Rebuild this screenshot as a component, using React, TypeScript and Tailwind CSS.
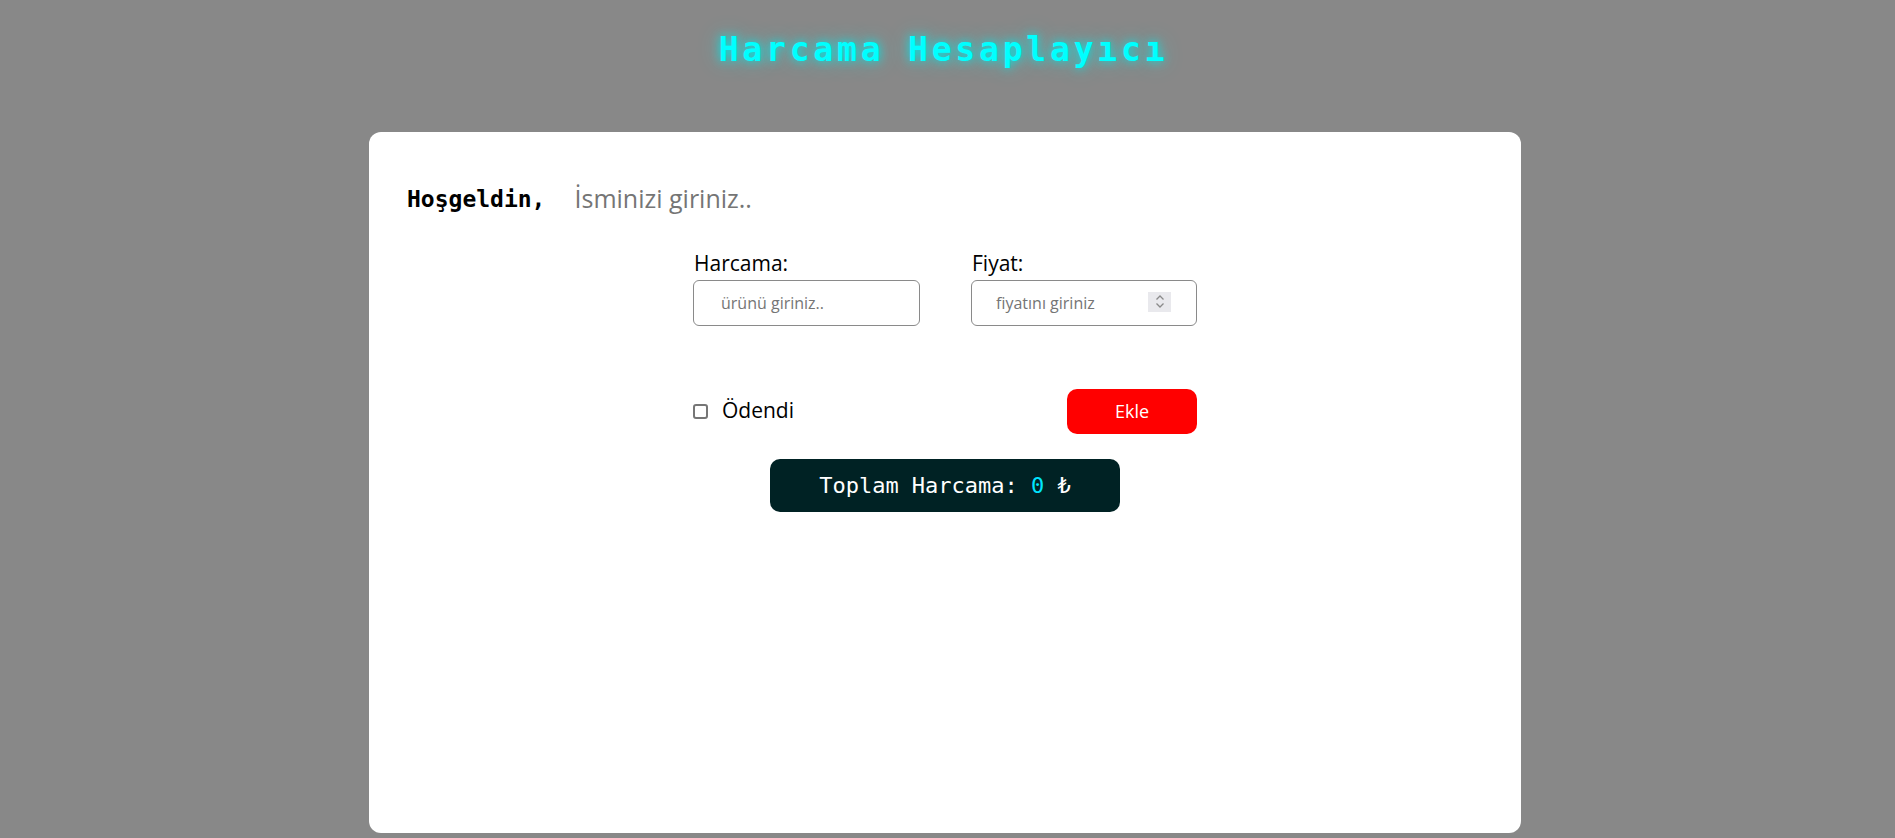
import { useState } from "react";

export default function App() {
  const [paid, setPaid] = useState(false);

  return (
    <div className="h-[838px] overflow-hidden bg-[#888888]">
      {/* Title */}
      <h1 className="pt-[30px] pr-[8px] text-center font-['DejaVu_Sans_Mono',monospace] text-[33px] leading-[40px] font-bold tracking-[3.8px] text-[#00ffff] [text-shadow:0_0_10px_#00e5e5,0_0_22px_rgba(0,255,255,0.45)]">
        Harcama Hesaplayıcı
      </h1>

      {/* Card */}
      <div className="mt-[62px] ml-[369px] w-[1152px] h-[701px] rounded-xl bg-white pt-[48px]">
        <div className="flex items-center pl-[38px]">
          <span className="font-['DejaVu_Sans_Mono',monospace] text-[23px] font-bold text-black">
            Hoşgeldin,
          </span>
          <input
            className="ml-[29px] w-[400px] bg-transparent font-['Open_Sans',sans-serif] text-[25px] text-black outline-none placeholder:text-[#757575]"
            placeholder="İsminizi giriniz.."
          />
        </div>

        {/* Form */}
        <div className="mx-auto mt-[32px] w-[504px] font-['Open_Sans',sans-serif]">
          <div className="flex gap-[51px]">
            <div className="flex flex-col">
              <label className="pl-[1px] text-[21px] leading-[26px] text-black">Harcama:</label>
              <input
                className="mt-[4px] h-[46px] w-[227px] rounded-md border border-[#8a8a8a] px-[27px] text-[16px] outline-none placeholder:text-[#757575]"
                placeholder="ürünü giriniz.."
              />
            </div>
            <div className="flex flex-col">
              <label className="pl-[1px] text-[21px] leading-[26px] text-black">Fiyat:</label>
              <div className="relative mt-[4px]">
                <input
                  className="h-[46px] w-[226px] rounded-md border border-[#8a8a8a] px-[24px] text-[16px] outline-none placeholder:text-[#757575]"
                  placeholder="fiyatını giriniz"
                />
                <div className="absolute right-[26px] top-[12px] flex h-[20px] w-[23px] items-center justify-center bg-[#e9e9ed]">
                  <svg width="10" height="15" viewBox="0 0 10 15" fill="none" stroke="#8a8a8a" strokeWidth="1.3">
                    <path d="M1.5 5.5 L5 2 L8.5 5.5" />
                    <path d="M1.5 9.5 L5 13 L8.5 9.5" />
                  </svg>
                </div>
              </div>
            </div>
          </div>

          <div className="mt-[63px] flex items-center justify-between">
            <label className="flex items-center gap-[14px] text-[21px] text-black">
              <input
                type="checkbox"
                checked={paid}
                onChange={(e) => setPaid(e.target.checked)}
                className="h-[15px] w-[15px] appearance-none rounded-[3px] border-2 border-[#767676] bg-white"
              />
              Ödendi
            </label>
            <button className="h-[45px] w-[130px] rounded-[10px] bg-[#ff0000] text-[18px] text-white">
              Ekle
            </button>
          </div>
        </div>

        {/* Total */}
        <div className="mx-auto mt-[25px] flex h-[53px] w-[350px] items-center justify-center rounded-[10px] bg-[#002224] font-['DejaVu_Sans_Mono',monospace] text-[22px] text-white">
          Toplam Harcama:&nbsp;<span className="text-[#00e5ff]">0</span>&nbsp;₺
        </div>
      </div>
    </div>
  );
}
